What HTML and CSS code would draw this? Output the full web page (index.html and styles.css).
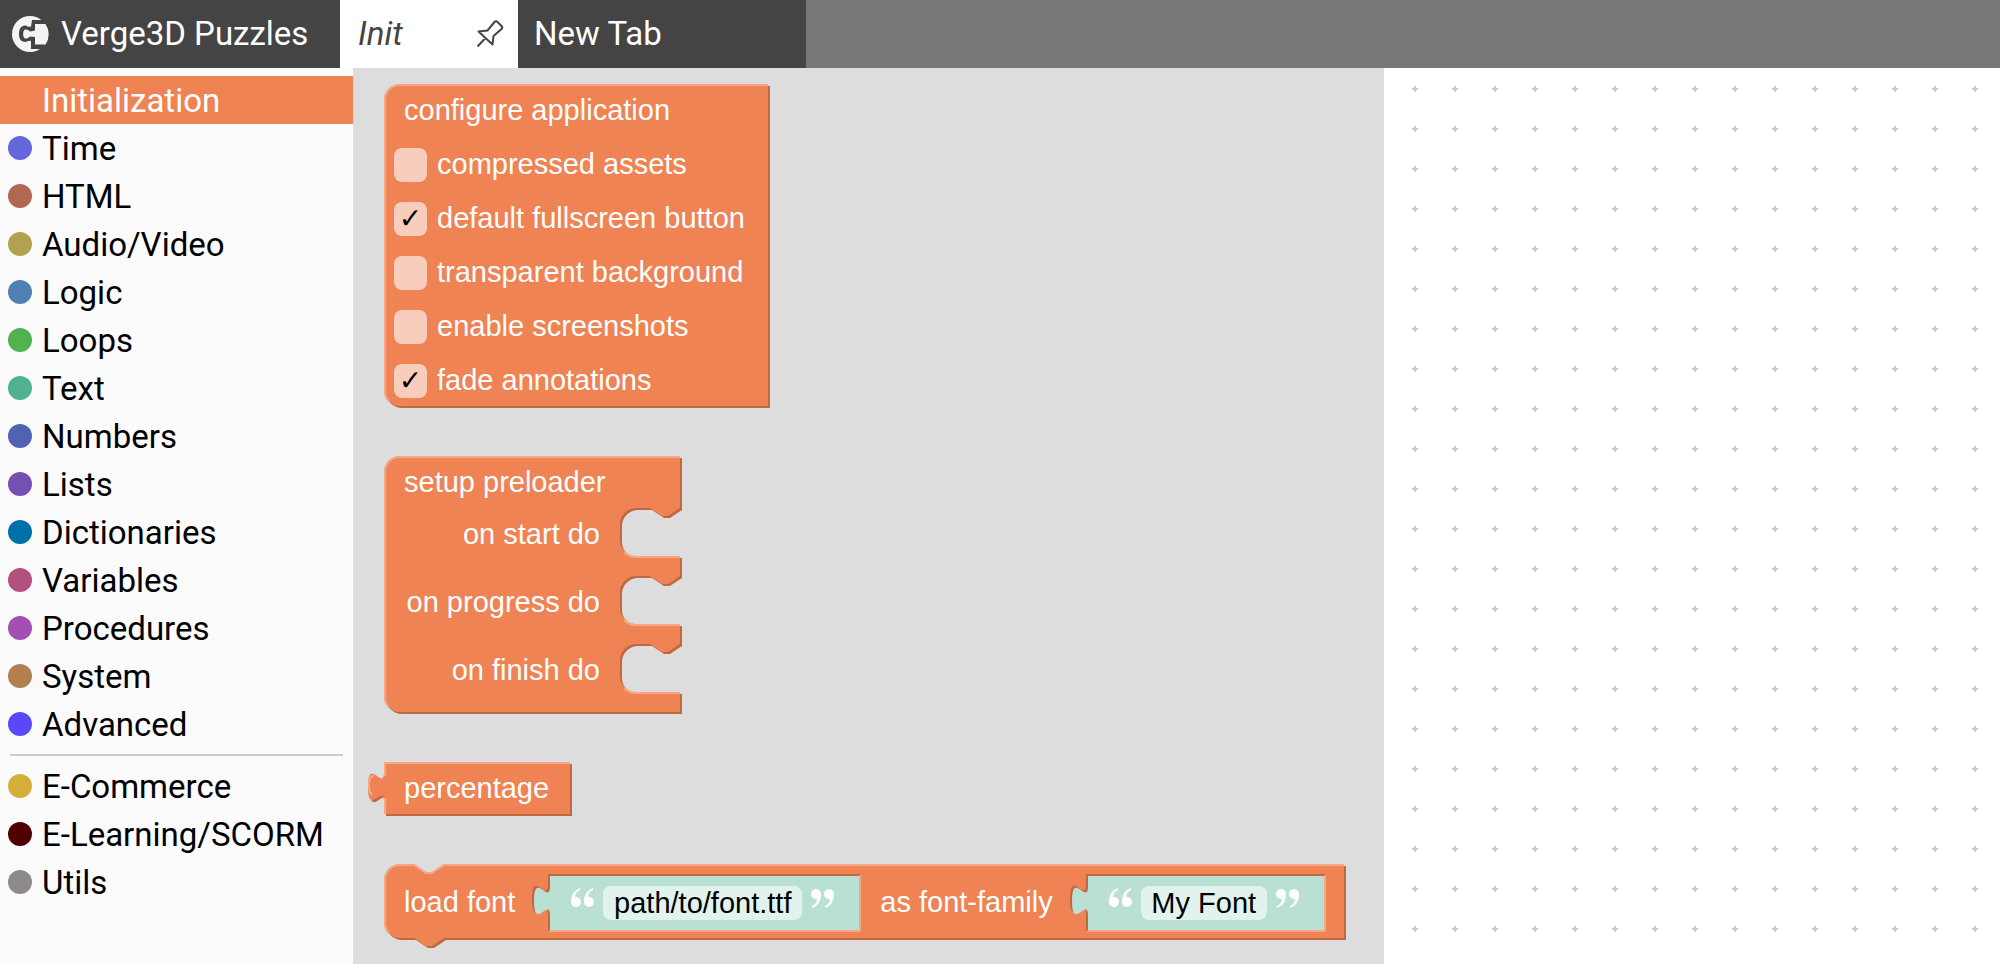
FILE: index.html
```
<!DOCTYPE html>
<html lang="en">
<head>
<meta charset="utf-8">
<title>Verge3D Puzzles</title>
<link rel="stylesheet" href="styles.css">
</head>
<body>
<header class="topbar">
  <div class="brand">
    <svg class="brand-logo" width="38" height="38" viewBox="0 0 38 38" aria-hidden="true">
      <circle cx="19" cy="19" r="18" fill="#f4f4f4"/>
      <path d="M40 5H21L20 11.500Q17 12.500 15 10.500C10 10 8 14 8 19S10 27 15 27Q18 25 20 26V34H40Z" fill="#444"/>
      <path d="M24 9H34.500A18 18 0 0 1 34.500 29.500H24V22L19 21.500Q17 24 14 23.500C11.500 22 11.500 16 14 14.500Q17 14 19 16.500L24 15.500Z" fill="#f4f4f4"/>
    </svg>
    <span>Verge3D Puzzles</span>
  </div>
  <nav class="tabs">
    <button class="tab tab-active" type="button"><span>Init</span>
      <svg width="28" height="30" viewBox="0 0 28 30" fill="none" stroke="#444" stroke-width="2" stroke-linejoin="round" aria-hidden="true">
        <path d="M1.500 27.500 9 19.500M2.500 12.500 11.500 11.500 18.500 3Q20 1.500 21.500 3L25.500 7Q27 8.500 25.500 10L17.500 17 16.500 25.500Z"/>
      </svg>
    </button>
    <button class="tab tab-new" type="button">New Tab</button>
  </nav>
</header>
<main class="editor">
  <nav class="toolbox">
    <button class="category selected" type="button"><i class="dot"></i><span>Initialization</span></button>
    <button class="category" type="button"><i class="dot time"></i><span>Time</span></button>
    <button class="category" type="button"><i class="dot html"></i><span>HTML</span></button>
    <button class="category" type="button"><i class="dot media"></i><span>Audio/Video</span></button>
    <button class="category" type="button"><i class="dot logic"></i><span>Logic</span></button>
    <button class="category" type="button"><i class="dot loops"></i><span>Loops</span></button>
    <button class="category" type="button"><i class="dot text"></i><span>Text</span></button>
    <button class="category" type="button"><i class="dot numbers"></i><span>Numbers</span></button>
    <button class="category" type="button"><i class="dot lists"></i><span>Lists</span></button>
    <button class="category" type="button"><i class="dot dictionaries"></i><span>Dictionaries</span></button>
    <button class="category" type="button"><i class="dot variables"></i><span>Variables</span></button>
    <button class="category" type="button"><i class="dot procedures"></i><span>Procedures</span></button>
    <button class="category" type="button"><i class="dot system"></i><span>System</span></button>
    <button class="category" type="button"><i class="dot advanced"></i><span>Advanced</span></button>
    <hr class="separator">
    <button class="category" type="button"><i class="dot commerce"></i><span>E-Commerce</span></button>
    <button class="category" type="button"><i class="dot learning"></i><span>E-Learning/SCORM</span></button>
    <button class="category" type="button"><i class="dot utils"></i><span>Utils</span></button>
  </nav>
  <section class="flyout">
    <div class="block">
      <svg class="shape" width="386" height="324" aria-hidden="true">
        <path class="dark" transform="translate(2 2)" d="M0 16A16 16 0 0 1 16 0H384V322H16A16 16 0 0 1 0 306Z"/>
        <path class="fill" d="M0 16A16 16 0 0 1 16 0H384V322H16A16 16 0 0 1 0 306Z"/>
        <path class="light" d="M5 317A15 15 0 0 1 1 306V16A15 15 0 0 1 16 1H384"/>
      </svg>
      <div class="rows">
        <div class="row title"><span>configure application</span></div>
        <label class="row"><input type="checkbox" class="check"><span>compressed assets</span></label>
        <label class="row"><input type="checkbox" class="check" checked><span>default fullscreen button</span></label>
        <label class="row"><input type="checkbox" class="check"><span>transparent background</span></label>
        <label class="row"><input type="checkbox" class="check"><span>enable screenshots</span></label>
        <label class="row"><input type="checkbox" class="check" checked><span>fade annotations</span></label>
      </div>
    </div>
    <div class="block">
      <svg class="shape" width="298" height="258" aria-hidden="true">
        <defs><path id="preloader" d="M0 16A16 16 0 0 1 16 0H296V52l-12 8h-6l-12-8h-14a16 16 0 0 0-16 16v16a16 16 0 0 0 16 16H296V120l-12 8h-6l-12-8h-14a16 16 0 0 0-16 16v16a16 16 0 0 0 16 16H296V188l-12 8h-6l-12-8h-14a16 16 0 0 0-16 16v16a16 16 0 0 0 16 16H296V256H16A16 16 0 0 1 0 240Z"/></defs>
        <use href="#preloader" class="dark" transform="translate(2 2)"/>
        <use href="#preloader" class="fill"/>
        <path class="light" d="M5 251A15 15 0 0 1 1 240V16A15 15 0 0 1 16 1H296M240 96A17 17 0 0 0 252 101H296M240 164A17 17 0 0 0 252 169H296M240 232A17 17 0 0 0 252 237H296"/>
      </svg>
      <div class="statements">
        <div class="title">setup preloader</div>
        <div class="statement">on start do</div>
        <div class="statement">on progress do</div>
        <div class="statement">on finish do</div>
      </div>
    </div>
    <div class="block">
      <svg class="shape" width="188" height="54" aria-hidden="true">
        <defs><path id="percentage" d="M0 0H186V52H0V40c0-20-16 16-16-15s16 5 16-15Z"/></defs>
        <use href="#percentage" class="dark" transform="translate(2 2)"/>
        <use href="#percentage" class="fill"/>
        <path class="light" d="M1 52V36M-12 33Q-15 30-15 24Q-15 13-10 14M1 14V1H186"/>
      </svg>
      <div class="title">percentage</div>
    </div>
    <div class="block">
      <svg class="shape" width="962" height="76" aria-hidden="true">
        <defs>
          <path id="loadfont" d="M0 16A16 16 0 0 1 16 0H30l12 8h6l12-8H960V74H60l-12 8h-6l-12-8H16A16 16 0 0 1 0 58Z"/>
          <g id="quotes" fill="#fff"><circle cx="6" cy="16" r="5"/><path d="M1 16Q1 5 10 2V4Q5 6 5 12Z"/><circle cx="19" cy="16" r="5"/><path d="M14 16Q14 5 23 2V4Q18 6 18 12Z"/></g>
        </defs>
        <use href="#loadfont" class="dark" transform="translate(2 2)"/>
        <use href="#loadfont" class="fill"/>
        <path class="light" d="M5 69A15 15 0 0 1 1 58V16A15 15 0 0 1 16 1H30l12 8h6l12-8H960"/>
      </svg>
      <div class="inline">
        <label for="path">load font</label>
        <div class="socket">
          <svg class="plug" width="20" height="36" aria-hidden="true">
            <path class="dark" d="M18 32c0-20-16 16-16-15s16 5 16-15Z" transform="translate(-2 -2)"/>
            <path class="teal" d="M20 32H18c0-20-16 16-16-15s16 5 16-15H20Z"/>
          </svg>
          <svg class="quote" width="24" height="24" viewBox="0 0 24 24" aria-hidden="true"><use href="#quotes"/></svg>
          <input id="path" class="field field-path" type="text" value="path/to/font.ttf">
          <svg class="quote" width="24" height="24" viewBox="0 0 24 24" aria-hidden="true"><use href="#quotes" transform="rotate(180 12 12)"/></svg>
        </div>
        <label for="family">as font-family</label>
        <div class="socket">
          <svg class="plug" width="20" height="36" aria-hidden="true">
            <path class="dark" d="M18 32c0-20-16 16-16-15s16 5 16-15Z" transform="translate(-2 -2)"/>
            <path class="teal" d="M20 32H18c0-20-16 16-16-15s16 5 16-15H20Z"/>
          </svg>
          <svg class="quote" width="24" height="24" viewBox="0 0 24 24" aria-hidden="true"><use href="#quotes"/></svg>
          <input id="family" class="field field-family" type="text" value="My Font">
          <svg class="quote" width="24" height="24" viewBox="0 0 24 24" aria-hidden="true"><use href="#quotes" transform="rotate(180 12 12)"/></svg>
        </div>
      </div>
    </div>
  </section>
  <section class="workspace">
    <svg width="100%" height="100%" aria-hidden="true">
      <defs><pattern id="grid" width="40" height="40" patternUnits="userSpaceOnUse"><path d="M28 21H34M31 18V24" stroke="#ccc" stroke-width="2"/></pattern></defs>
      <rect width="100%" height="100%" fill="url(#grid)"/>
    </svg>
  </section>
</main>
</body>
</html>
```
FILE: styles.css
```
* { box-sizing: border-box; }
body {
  margin: 0;
  height: 100vh;
  display: flex;
  flex-direction: column;
  overflow: hidden;
  background: #fff;
  font: 33px/48px Roboto, sans-serif;
}
button { margin: 0; border: 0; padding: 0; font: inherit; text-align: left; }
.topbar { display: flex; flex: none; height: 68px; background: #777; color: #fff; }
.brand { display: flex; align-items: center; gap: 12px; width: 340px; padding-left: 11px; background: #444; }
.tabs { display: flex; }
.tab { display: flex; align-items: center; justify-content: space-between; background: #444; color: #fff; }
.tab-active { width: 178px; padding: 0 14px 0 18px; background: #fff; color: #444; font-style: italic; }
.tab-new { width: 288px; padding-left: 16px; }
.editor { display: flex; flex: 1; min-height: 0; }
.toolbox { width: 353px; flex: none; padding-top: 8px; background: #fbfbfb; }
.category {
  display: flex;
  align-items: center;
  gap: 10px;
  width: 100%;
  height: 48px;
  padding-left: 8px;
  background: transparent;
  color: #000;
}
.category > span { padding-top: 2px; }
.category.selected { background: #ef8354; color: #fff; }
.dot { width: 24px; height: 24px; border-radius: 50%; }
.time { background: #6666dd; }
.html { background: #b26850; }
.media { background: #b2a14f; }
.logic { background: #5080b2; }
.loops { background: #50b250; }
.text { background: #50b292; }
.numbers { background: #5062b2; }
.lists { background: #7350b2; }
.dictionaries { background: #0070a8; }
.variables { background: #b25080; }
.procedures { background: #a350b2; }
.system { background: #b28050; }
.advanced { background: #5a48f8; }
.commerce { background: #d4af37; }
.learning { background: #500000; }
.utils { background: #8e8a8a; }
.separator { height: 2px; margin: 6px 10px; border: 0; background: #ccc; }
.flyout {
  display: flex;
  flex-direction: column;
  align-items: flex-start;
  flex: none;
  gap: 48px;
  width: 1031px;
  padding: 16px 0 0 31px;
  background: #ddd;
  color: #fff;
  font: 29px/52px "Liberation Sans", Arial, sans-serif;
}
.block { display: grid; white-space: nowrap; }
.block > * { grid-area: 1 / 1; }
.shape { display: block; overflow: visible; }
.fill { fill: #ef8354; }
.dark { fill: #bf6943; }
.light { fill: none; stroke: #f4a887; stroke-width: 2; }
.teal { fill: #b9e0d3; }
.row { display: flex; align-items: center; gap: 10px; height: 54px; padding-left: 10px; }
.row > span { padding-bottom: 2px; }
.title, .row.title { padding-left: 20px; }
.check {
  display: grid;
  place-items: center;
  appearance: none;
  width: 33px;
  height: 34px;
  margin: 0;
  border-radius: 8px;
  background: #f9cdbb;
}
.check:checked::after { content: "✓"; color: #000; font: 28px/34px "DejaVu Sans", sans-serif; }
.statements { display: flex; flex-direction: column; width: 216px; }
.statement { margin-bottom: 16px; text-align: right; }
.inline { display: flex; align-items: center; padding-left: 20px; }
.socket {
  position: relative;
  display: flex;
  align-items: center;
  height: 58px;
  margin: 2px 19px 0 33px;
  padding: 0 24px 0 20px;
  gap: 9px;
  border: 2px solid;
  border-color: #bf6943 #f4a887 #f4a887 #bf6943;
  background: #b9e0d3;
}
.plug { position: absolute; left: -18px; top: 8px; overflow: visible; }
.quote { align-self: flex-start; margin-top: 10px; }
.field {
  height: 34px;
  border: 0;
  border-radius: 8px;
  padding: 0;
  background: #e2f3ed;
  color: #000;
  font: inherit;
  line-height: 34px;
  text-align: center;
}
.field-path { width: 199px; }
.field-family { width: 126px; }
.workspace { flex: 1; min-width: 0; background: #fff; }
.workspace svg { display: block; }
```
